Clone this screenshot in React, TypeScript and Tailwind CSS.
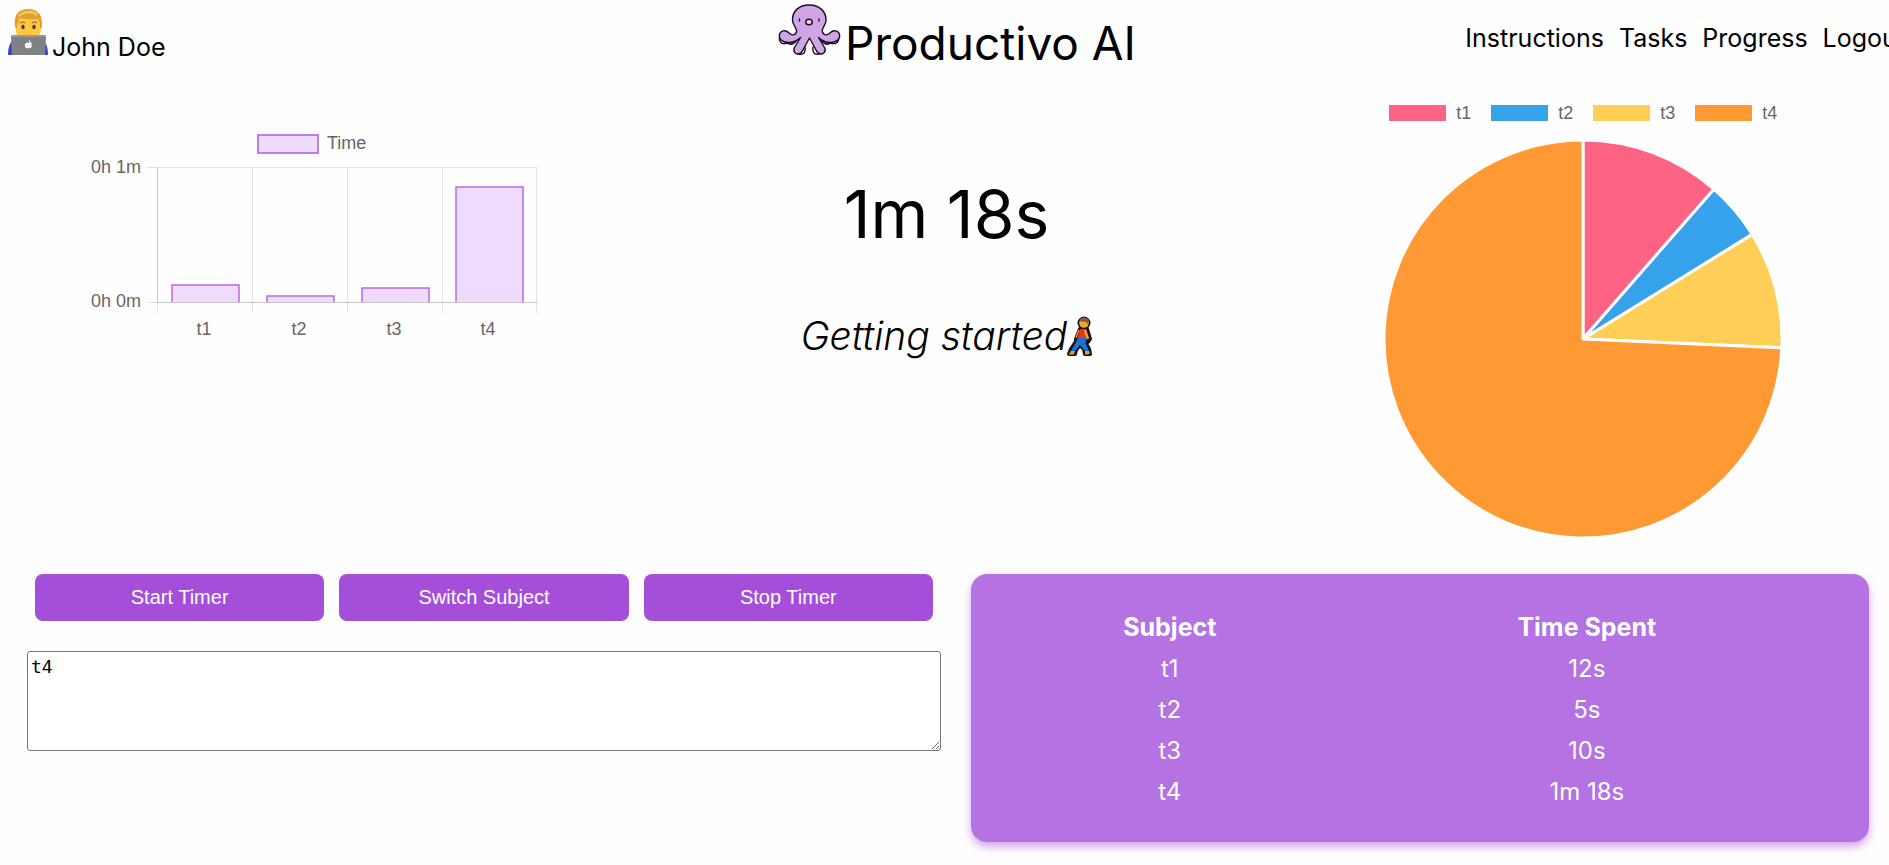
import React from "react";

type Subject = { name: string; seconds: number; spent: string; color: string };

const subjects: Subject[] = [
  { name: "t1", seconds: 12, spent: "12s", color: "#ff6384" },
  { name: "t2", seconds: 5, spent: "5s", color: "#36a2eb" },
  { name: "t3", seconds: 10, spent: "10s", color: "#ffce56" },
  { name: "t4", seconds: 78, spent: "1m 18s", color: "#ff9933" },
];

const navLinks = ["Instructions", "Tasks", "Progress", "Logout"];
const timerActions = ["Start Timer", "Switch Subject", "Stop Timer"];

function DeveloperIcon() {
  return (
    <svg viewBox="0 0 40 46" className="h-[46px] w-10 shrink-0" aria-hidden="true">
      <path d="M0 46c0-8 2-13 6-15h28c4 2 6 7 6 15z" fill="#3a45c4" />
      <path d="M8 11C7 4 12 1 20 1s14 3 13 10c1 8 0 17-7 20-4 1-8 1-12 0C7 28 7 18 8 11z" fill="#fcc940" />
      <path d="M7 18C5 6 11 0 20 0c9 0 15 5 14 18l-2 2c0-4 0-8-2-10-7 1-13 0-18-1-2 3-3 7-3 11z" fill="#e2a033" />
      <path d="M11 7c5-5 14-5 18-1" stroke="#f5c765" strokeWidth="2.500" fill="none" />
      <ellipse cx="15" cy="18" rx="1.700" ry="2.300" fill="#4e342e" />
      <ellipse cx="26" cy="18" rx="1.700" ry="2.300" fill="#4e342e" />
      <path d="M12 14q3-2 5 0M24 14q3-2 5 0" stroke="#9b6420" strokeWidth="1.200" fill="none" />
      <path d="M3 28q0-2 2-2h31q2 0 2 2l-1 18H4z" fill="#7f8285" />
      <path d="M3 28q0-2 2-2h31q2 0 2 2z" fill="#95989b" />
      <path d="M20.500 34c1-1 3-.800 3.500.300-1 .7-1 2.200.2 2.800-.7 1.900-1.900 2.600-3.700 1.900-2 .7-3.500-.4-3.700-2.500-.2-2.300 1.500-3.500 3.700-2.500zM20.500 33.500q0-2 1.700-2.500 0 2-1.700 2.500z" fill="#fff" />
    </svg>
  );
}

function OctopusIcon() {
  return (
    <svg viewBox="0 0 64 52" className="mb-[15px] h-[52px] w-16 shrink-0" aria-hidden="true">
      <g strokeLinejoin="round" strokeLinecap="round" stroke="#171020" strokeWidth="1.400">
        <path d="M2.500 33c-1 5 3 8 8 6M61.500 33c1 5-3 8-8 6M22 50c5 1 7-2 6-7M42 50c-5 1-7-2-6-7" fill="#fff" />
        <path d="M9 38c4 4 9 2 11-2M55 38c-4 4-9 2-11-2" fill="#a34fd0" />
        <path
          d="M15.500 16C15.500 7 22 1 32 1s17 6 17 15c0 6-5 8-3.500 12 1.500 4 5 3.500 8 .500 3-3 8-2 9 2 1 5-4 8-9 8-5 0-9-2-12-5l6 10c2 4-1 7-4 6.500-3-.5-4-3-5-5l-6-11-6 11c-1 2-2 4.500-5 5-3 .500-6-2.500-4-6.500l6-10c-3 3-7 5-12 5-5 0-10-3-9-8 1-4 6-5 9-2 3 3 6.500 3.500 8-.500C20.500 24 15.500 22 15.500 16z"
          fill="#cfa5e6"
        />
        <ellipse cx="32" cy="18" rx="3.200" ry="2.800" fill="#ffd9dc" />
        <path d="M22.500 15v2M42 15v2" />
      </g>
    </svg>
  );
}

function WalkerIcon() {
  return (
    <svg viewBox="0 0 25 41" className="h-[41px] w-[25px] shrink-0" aria-hidden="true">
      <g stroke="#151515" strokeWidth="4" strokeLinejoin="round" fill="#151515">
        <circle cx="17" cy="7" r="4.500" />
        <path d="M13 13h7l3 10-2 3H10l-1-3z" />
        <path d="M11 22h9l-2 4 4 7 1 5h-5l-1-5-4-4-4 5-1 4H2l2-5 4-6z" />
      </g>
      <circle cx="17" cy="7" r="4.800" fill="#efa92e" />
      <path d="M12.500 5c1-5 9-4 9.500 0l-1 3-2-2z" fill="#8a5638" />
      <path d="M13 13h6l2 10H10.500z" fill="#e9351c" />
      <path d="M18 14l3 9" stroke="#ff9a28" strokeWidth="2.500" />
      <path d="M12 14l-3 8" stroke="#ff7a28" strokeWidth="1.500" />
      <path d="M11 22h9l-1.500 5 3.500 8h-4l-5-6-5 6H4l4-7z" fill="#1972d2" />
      <path d="M4 35h4l-1 3.500H1.500zM18 35h4l1 2-2 1.500h-3z" fill="#e4992f" />
    </svg>
  );
}

function Header() {
  return (
    <header className="flex h-[72px] items-start justify-between overflow-hidden">
      <div className="flex flex-1 items-end gap-1 pl-2 pt-[9px]">
        <DeveloperIcon />
        <span className="text-[25px] leading-4">John Doe</span>
      </div>
      <h1 className="flex items-end gap-1 pt-[2px] text-[46px] leading-[56px]">
        <OctopusIcon />
        <span className="pt-[13px]">Productivo AI</span>
      </h1>
      <nav className="-mr-4 flex flex-1 justify-end gap-[15px] pt-5 text-[25px] leading-9">
        {navLinks.map((link) => (
          <a key={link} href="#">
            {link}
          </a>
        ))}
      </nav>
    </header>
  );
}

function BarChart() {
  const baseline = 182;
  return (
    <svg viewBox="0 0 460 220" className="h-[220px] w-[460px] max-w-full" role="img" aria-label="Time per subject">
      <g fill="#666" fontFamily="Liberation Sans, Arial, sans-serif" fontSize="18">
        <rect x="178" y="15" width="60" height="18" fill="#efdcfc" stroke="#c27be9" strokeWidth="2" />
        <text x="247" y="29">Time</text>
        <text x="61" y="53" textAnchor="end">0h 1m</text>
        <text x="61" y="187" textAnchor="end">0h 0m</text>
        <path d="M67 47.500h390M172.500 47v146M267.500 47v146M362.500 47v146M456.500 47v146M77.500 182v11M67 182.500h10" stroke="#e2e2e2" fill="none" />
        {subjects.map((subject, i) => {
          const height = [17, 6, 14, 115][i];
          const x = 92 + i * 95 - (i === 3 ? 1 : 0);
          return (
            <g key={subject.name}>
              <rect x={x} y={baseline - height} width="67" height={height} fill="#efdcfc" />
              <path d={`M${x} ${baseline}v${-height}h67v${height}`} fill="none" stroke="#b968e4" strokeWidth="1.500" />
              <text x={x + 32} y="215" textAnchor="middle">{subject.name}</text>
            </g>
          );
        })}
        <path d="M77.500 47v135.500h380" stroke="#c9c9c9" fill="none" />
      </g>
    </svg>
  );
}

function PieChart() {
  const total = subjects.reduce((sum, s) => sum + s.seconds, 0);
  const r = 199;
  let angle = 0;
  const slices = subjects.map((s) => {
    const start = angle;
    angle += (s.seconds / total) * Math.PI * 2;
    const end = angle;
    const large = end - start > Math.PI ? 1 : 0;
    const d = `M200 200L${200 + r * Math.sin(start)} ${200 - r * Math.cos(start)}A${r} ${r} 0 ${large} 1 ${200 + r * Math.sin(end)} ${200 - r * Math.cos(end)}Z`;
    return <path key={s.name} d={d} fill={s.color} stroke="#fff" strokeWidth="3" strokeLinejoin="round" />;
  });
  return (
    <div className="flex flex-col items-center">
      <ul className="flex gap-5 font-['Liberation_Sans',Arial,sans-serif] text-[18px] leading-5 text-[#666]">
        {subjects.map((s) => (
          <li key={s.name} className="flex items-center gap-[10px]">
            <span className="h-4 w-[57px]" style={{ backgroundColor: s.color }} />
            {s.name}
          </li>
        ))}
      </ul>
      <svg viewBox="0 0 400 400" className="mt-4 size-[400px]" role="img" aria-label="Share of time per subject">
        {slices}
      </svg>
    </div>
  );
}

export default function App() {
  return (
    <div className="min-h-screen overflow-x-hidden bg-[#fefefe] font-['Inter',sans-serif] text-black">
      <Header />
      <main>
        <section className="grid grid-cols-3">
          <div className="pl-20 pt-12">
            <BarChart />
          </div>
          <div className="flex flex-col items-center pl-1 pt-[108px] text-center">
            <p className="text-[66px] leading-[68px]">1m 18s</p>
            <p className="mt-[66px] flex items-center text-[39px] font-light italic leading-[44px]">
              Getting started
              <WalkerIcon />
            </p>
          </div>
          <div className="flex justify-center pl-[18px] pt-[31px]">
            <PieChart />
          </div>
        </section>
        <section className="grid grid-cols-[914fr_898fr] items-start gap-[30px] pl-[27px] pr-5 pt-[35px]">
          <div>
            <div className="flex gap-[15px] px-2">
              {timerActions.map((action) => (
                <button
                  key={action}
                  type="button"
                  className="h-[47px] flex-1 rounded-lg bg-[#a44eda] pb-[2px] font-['Liberation_Sans',Arial,sans-serif] text-[20px] text-white"
                >
                  {action}
                </button>
              ))}
            </div>
            <textarea
              aria-label="Subject"
              defaultValue="t4"
              className="mt-[30px] block h-[100px] w-full resize rounded-[3px] border border-[#767676] bg-white px-[3px] py-1 font-['DejaVu_Sans_Mono',monospace] text-[18px] leading-[22px]"
            />
          </div>
          <div className="rounded-2xl bg-[#b472e2] px-8 pb-[30px] pt-[33px] shadow-[0_5px_8px_#b472e299]">
            <table className="w-full text-center text-[24px] leading-[41px] text-white">
              <thead className="text-[25px]">
                <tr>
                  <th className="w-2/5 font-bold">Subject</th>
                  <th className="font-bold">Time Spent</th>
                </tr>
              </thead>
              <tbody>
                {subjects.map((s) => (
                  <tr key={s.name}>
                    <td>{s.name}</td>
                    <td>{s.spent}</td>
                  </tr>
                ))}
              </tbody>
            </table>
          </div>
        </section>
      </main>
    </div>
  );
}
